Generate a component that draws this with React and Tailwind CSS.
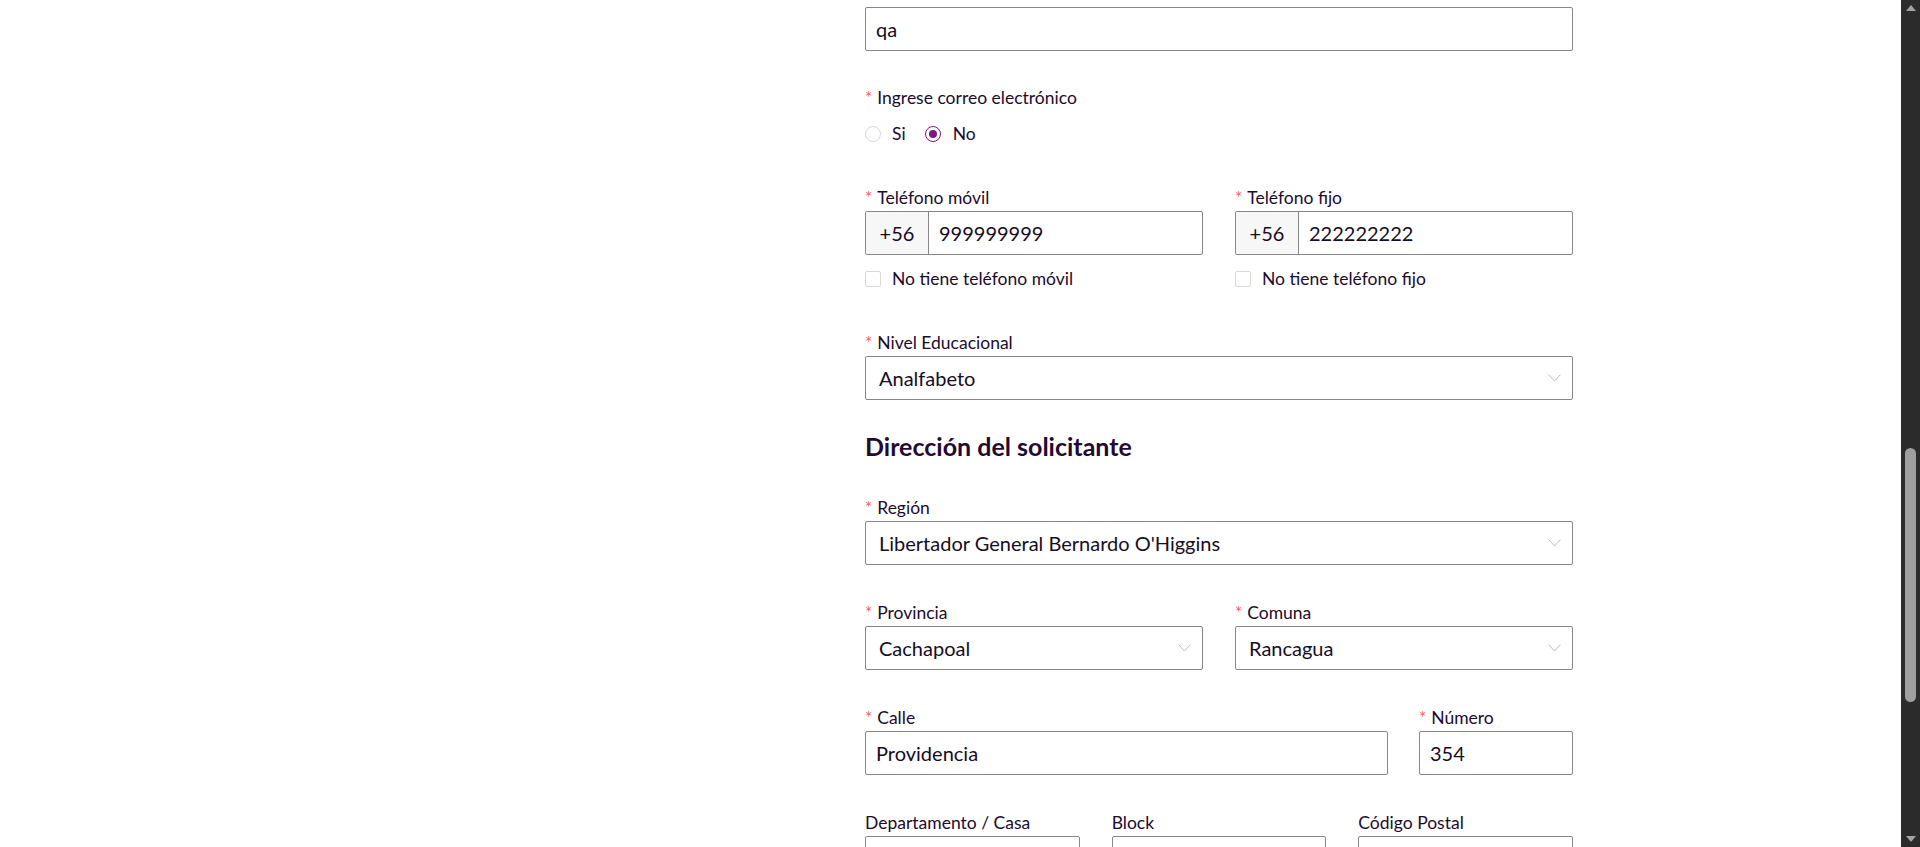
import React from "react";

const FONT = { fontFamily: "Lato, 'Open Sans', sans-serif" };

function Label({ children, required = true }) {
  return (
    <div className="mb-[2px] flex h-[22px] items-center text-[17.5px] leading-[22px] text-[#1d0b2e]">
      {required && <span className="mr-[5px] text-[17px] text-[#ff5a5f]">*</span>}
      {children}
    </div>
  );
}

function TextInput({ value }) {
  return (
    <div className="flex h-[44px] items-center rounded-[2px] border border-[#878787] bg-white px-[10px] text-[20px] text-[#160d1f]">
      {value}
    </div>
  );
}

function Chevron() {
  return (
    <svg width="13" height="8" viewBox="0 0 13 8" fill="none" className="shrink-0">
      <path d="M0.5 0.5 L6.5 7 L12.5 0.5" stroke="#bdbdbd" strokeWidth="1" />
    </svg>
  );
}

function Select({ value }) {
  return (
    <div className="flex h-[44px] items-center justify-between rounded-[2px] border border-[#878787] bg-white pl-[13px] pr-[11px] text-[20px] text-[#160d1f]">
      <span>{value}</span>
      <Chevron />
    </div>
  );
}

function PhoneInput({ value }) {
  return (
    <div className="flex h-[44px] overflow-hidden rounded-[2px] border border-[#878787] bg-white text-[20px] text-[#160d1f]">
      <div className="flex w-[63px] items-center justify-center border-r border-[#878787] bg-[#f7f7f7]">
        +56
      </div>
      <div className="flex flex-1 items-center px-[10px]">{value}</div>
    </div>
  );
}

function Checkbox({ label }) {
  return (
    <div className="mt-[13px] flex h-[22px] items-center text-[17.5px] text-[#1d0b2e]">
      <span className="h-[16px] w-[16px] rounded-[2px] border border-[#d9d9d9] bg-white" />
      <span className="ml-[11px]">{label}</span>
    </div>
  );
}

function Scrollbar() {
  return (
    <div className="flex h-[847px] w-[19px] shrink-0 flex-col items-center justify-between bg-[#2b2b2b] py-[5px]">
      <svg width="10" height="6" viewBox="0 0 10 6">
        <path d="M0 6 L5 0 L10 6 Z" fill="#a3a3a3" />
      </svg>
      <div className="flex w-full flex-1 flex-col pt-[437px] pb-[134px]">
        <div className="mx-auto h-full w-[11px] rounded-full bg-[#9f9f9f]" />
      </div>
      <svg width="10" height="6" viewBox="0 0 10 6">
        <path d="M0 0 L10 0 L5 6 Z" fill="#a3a3a3" />
      </svg>
    </div>
  );
}

export default function App() {
  return (
    <div className="flex h-[847px] w-full overflow-hidden bg-white" style={FONT}>
      <div className="flex-1 overflow-hidden">
        <div className="ml-[865px] w-[708px] pt-[7px]">
          <TextInput value="qa" />

          <div className="mt-[36px]">
            <Label>Ingrese correo electrónico</Label>
            <div className="mt-[13px] flex h-[24px] items-center text-[17.5px] text-[#1d0b2e]">
              <span className="h-[16px] w-[16px] rounded-full border border-[#d9d9d9] bg-white" />
              <span className="ml-[11px]">Si</span>
              <span className="ml-[19px] flex h-[16px] w-[16px] items-center justify-center rounded-full border border-[#7d1a82] bg-white">
                <span className="h-[8px] w-[8px] rounded-full bg-[#7d1a82]" />
              </span>
              <span className="ml-[12px]">No</span>
            </div>
          </div>

          <div className="mt-[41px] grid grid-cols-2 gap-x-[32px]">
            <div>
              <Label>Teléfono móvil</Label>
              <PhoneInput value="999999999" />
              <Checkbox label="No tiene teléfono móvil" />
            </div>
            <div>
              <Label>Teléfono fijo</Label>
              <PhoneInput value="222222222" />
              <Checkbox label="No tiene teléfono fijo" />
            </div>
          </div>

          <div className="mt-[42px]">
            <Label>Nivel Educacional</Label>
            <Select value="Analfabeto" />
          </div>

          <h2 className="mt-[31px] h-[30px] text-[25px] font-bold leading-[30px] text-[#240a33]">
            Dirección del solicitante
          </h2>

          <div className="mt-[36px]">
            <Label>Región</Label>
            <Select value="Libertador General Bernardo O'Higgins" />
          </div>

          <div className="mt-[37px] grid grid-cols-2 gap-x-[32px]">
            <div>
              <Label>Provincia</Label>
              <Select value="Cachapoal" />
            </div>
            <div>
              <Label>Comuna</Label>
              <Select value="Rancagua" />
            </div>
          </div>

          <div className="mt-[37px] grid grid-cols-[523px_1fr] gap-x-[31px]">
            <div>
              <Label>Calle</Label>
              <TextInput value="Providencia" />
            </div>
            <div>
              <Label>Número</Label>
              <TextInput value="354" />
            </div>
          </div>

          <div className="mt-[37px] grid grid-cols-3 gap-x-[32px]">
            <div>
              <Label required={false}>Departamento / Casa</Label>
              <TextInput value="" />
            </div>
            <div>
              <Label required={false}>Block</Label>
              <TextInput value="" />
            </div>
            <div>
              <Label required={false}>Código Postal</Label>
              <TextInput value="" />
            </div>
          </div>
        </div>
      </div>
      <Scrollbar />
    </div>
  );
}
